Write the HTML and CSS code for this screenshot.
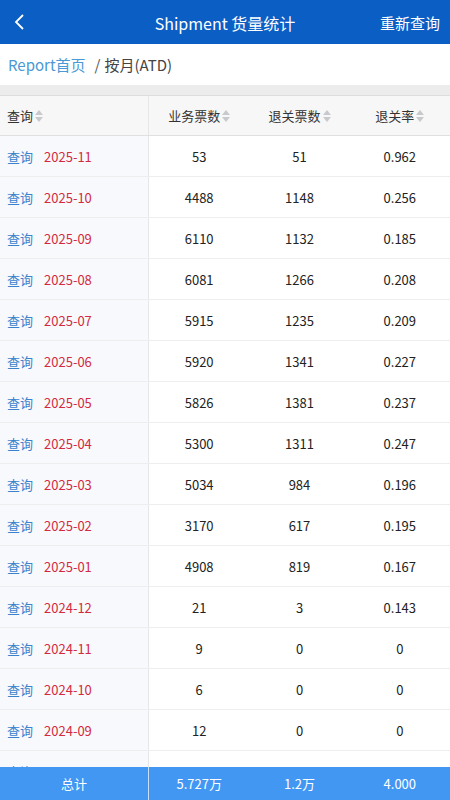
FILE: index.html
```html
<!DOCTYPE html>
<html>
<head>
<meta charset="utf-8">
<link rel="stylesheet" href="styles.css">
</head>
<body>
<div class="page">
  <div class="topbar">
    <div class="back"><svg width="14" height="18" viewBox="0 0 14 18"><path d="M10 2 L3 9 L10 16" fill="none" stroke="#fff" stroke-width="1.8"/></svg></div>
    <div class="title">Shipment 货量统计</div>
    <div class="action">重新查询</div>
  </div>
  <div class="crumb"><span class="crumb-link">Report首页</span><span class="crumb-sep">/</span><span class="crumb-cur">按月(ATD)</span></div>
  <div class="gap"></div>
  <div class="table">
    <div class="row head">
      <div class="c first">查询<span class="sort"></span></div>
      <div class="c">业务票数<span class="sort"></span></div>
      <div class="c">退关票数<span class="sort"></span></div>
      <div class="c">退关率<span class="sort"></span></div>
    </div>
    <div class="body" id="body"></div>
  </div>
  <div class="total">
    <div class="c first">总计</div>
    <div class="c">5.727万</div>
    <div class="c">1.2万</div>
    <div class="c">4.000</div>
  </div>
</div>
<script src="app.js"></script>
</body>
</html>
```
FILE: app.js
```js
var data = [
["2025-11",53,51,"0.962"],["2025-10",4488,1148,"0.256"],["2025-09",6110,1132,"0.185"],
["2025-08",6081,1266,"0.208"],["2025-07",5915,1235,"0.209"],["2025-06",5920,1341,"0.227"],
["2025-05",5826,1381,"0.237"],["2025-04",5300,1311,"0.247"],["2025-03",5034,984,"0.196"],
["2025-02",3170,617,"0.195"],["2025-01",4908,819,"0.167"],["2024-12",21,3,"0.143"],
["2024-11",9,0,"0"],["2024-10",6,0,"0"],["2024-09",12,0,"0"],["2024-08",3,0,"0"]
];
var html = "";
data.forEach(function(d){
  html += '<div class="row"><div class="c first"><span class="q">查询</span><span class="date">'+d[0]+'</span></div>'+
    '<div class="c">'+d[1]+'</div><div class="c">'+d[2]+'</div><div class="c">'+d[3]+'</div></div>';
});
document.getElementById("body").innerHTML = html;
```
FILE: styles.css
```css
* { box-sizing: border-box; }
body { margin: 0; font-family: "Noto Sans CJK SC", "Noto Sans", sans-serif; color: #333; background: #fff; }
.page { width: 450px; height: 800px; display: flex; flex-direction: column; overflow: hidden; }
.topbar { height: 44px; background: #0b5ec4; color: #fff; display: flex; align-items: center; position: relative; flex: none; }
.back { width: 44px; display: flex; justify-content: center; padding-right: 4px; }
.back svg { display: block; }
.title { position: absolute; left: 0; right: 0; text-align: center; font-size: 16px; pointer-events: none; padding-top: 1px; }
.action { margin-left: auto; margin-right: 10px; font-size: 15px; }
.crumb { height: 41px; display: flex; align-items: center; padding-left: 8px; font-size: 15px; flex: none; }
.crumb-link { color: #4a98d4; }
.crumb-sep { color: #555; margin: 0 4px 0 9px; }
.crumb-cur { color: #444; }
.gap { height: 10px; background: #ececec; flex: none; }
.table { flex: 1; overflow: hidden; display: flex; flex-direction: column; }
.row { display: flex; height: 41px; border-bottom: 1px solid #eeeeee; flex: none; }
.c { flex: 1; display: flex; align-items: center; justify-content: center; font-size: 13px; color: #222; }
.c.first { flex: none; width: 149px; justify-content: flex-start; padding-left: 7px; background: #f8f9fd; border-right: 1px solid #e6e6e6; }
.row.head { background: #f7f7f7; border-top: 1px solid #dedede; border-bottom: 1px solid #e0e0e0; height: 41px; }
.row.head .c { color: #333; background: #f7f7f7; }
.row.head .c.first { background: #f7f7f7; }
.sort { display: inline-block; width: 8px; height: 12px; margin-left: 2px; position: relative; }
.sort::before, .sort::after { content: ""; position: absolute; left: 0; border-left: 4px solid transparent; border-right: 4px solid transparent; }
.sort::before { top: 0; border-bottom: 5px solid #c8c9cc; }
.sort::after { bottom: 0; border-top: 5px solid #c8c9cc; }
.q { color: #3a82cc; }
.date { color: #d32a3e; margin-left: 11px; }
.total { height: 33px; background: #4297f2; display: flex; flex: none; }
.total .c { color: #fff; font-size: 13px; }
.total .c.first { background: #4297f2; justify-content: center; padding-left: 0; border-right: 1px solid #c9e0fa; }
```
